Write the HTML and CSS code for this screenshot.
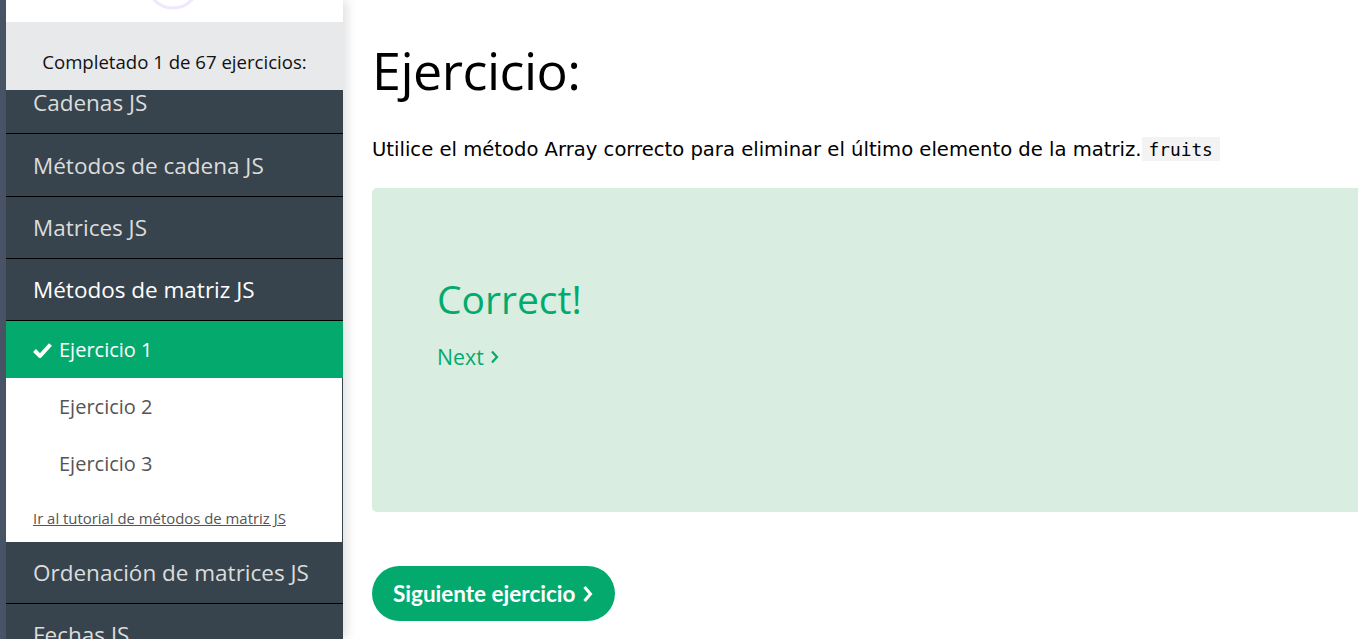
FILE: index.html
```html
<!DOCTYPE html>
<html lang="es">
<head>
<meta charset="utf-8">
<title>Ejercicio</title>
<link rel="stylesheet" href="styles.css">
</head>
<body>
<div class="strip"></div>
<aside class="sidebar">
  <div class="top">
    <svg class="ring" width="80" height="22" viewBox="0 0 80 22"><circle cx="40" cy="-18" r="26" fill="none" stroke="#efe7fe" stroke-width="3"/></svg>
  </div>
  <div class="progress">Completado 1 de 67 ejercicios:</div>
  <div class="list">
    <div class="item first">Cadenas JS</div>
    <div class="item tall">Métodos de cadena JS</div>
    <div class="item">Matrices JS</div>
    <div class="item open">Métodos de matriz JS</div>
    <div class="sub">
      <div class="ex active"><svg class="check" width="19" height="16" viewBox="0 0 19 16"><path d="M1.5 8.5 L7 14 L17.5 2.5" fill="none" stroke="#fff" stroke-width="4" stroke-linejoin="miter"/></svg>Ejercicio 1</div>
      <div class="ex">Ejercicio 2</div>
      <div class="ex">Ejercicio 3</div>
      <a class="tut" href="#">Ir al tutorial de métodos de matriz JS</a>
    </div>
    <div class="item">Ordenación de matrices JS</div>
    <div class="item">Fechas JS</div>
  </div>
</aside>
<main class="main">
  <h1 class="title">Ejercicio:</h1>
  <p class="task">Utilice el método Array correcto para eliminar el último elemento de la matriz.<code class="code">fruits</code></p>
  <div class="panel">
    <div class="correct">Correct!</div>
    <div class="next">Next <svg class="chev" width="9" height="14" viewBox="0 0 9 14"><path d="M2 1.5 L7 7 L2 12.5" fill="none" stroke="#04aa6d" stroke-width="2.2"/></svg></div>
  </div>
  <a class="btn" href="#">Siguiente ejercicio <svg class="chev2" width="11" height="18" viewBox="0 0 11 18"><path d="M2.5 2 L8.5 9 L2.5 16" fill="none" stroke="#fff" stroke-width="3"/></svg></a>
</main>
</body>
</html>
```
FILE: styles.css
```css
html, body { margin: 0; padding: 0; height: 100%; overflow: hidden; background: #fff; }
body { display: flex; font-family: "Open Sans", "Noto Sans", sans-serif; }
.strip { width: 6px; flex: none; background: #4a5467; }
.sidebar { width: 337px; flex: none; background: #38444d; display: flex; flex-direction: column; box-shadow: 4px 0 10px rgba(0,0,0,0.12); position: relative; z-index: 2; height: 100%; overflow: hidden; }
.top { height: 22px; flex: none; background: #fff; display: flex; justify-content: center; }
.ring { display: block; margin-left: -4px; }
.progress { height: 68px; flex: none; background: #e8e9eb; color: #111; font-size: 18.6px; display: flex; align-items: center; justify-content: center; padding-top: 10px; box-sizing: border-box; position: relative; z-index: 1; }
.list { display: flex; flex-direction: column; flex: none; }
.item { height: 61px; border-bottom: 1px solid #000; color: #dcdcdc; font-size: 22.5px; padding-left: 27px; display: flex; align-items: center; flex: none; }
.item.first { margin-top: -18px; }
.item.tall { height: 62px; }
.item.open { color: #fff; }
.sub { background: #fff; margin-right: 1px; display: flex; flex-direction: column; height: 221px; flex: none; }
.ex { height: 57px; padding-left: 53px; display: flex; align-items: center; font-size: 20px; color: #555; flex: none; }
.ex.active { background: #04aa6d; color: #fff; padding-left: 27px; margin-right: -1px; }
.check { margin-right: 7px; }
.tut { font-size: 14.9px; color: #555; padding-left: 27px; margin-top: 16px; align-self: flex-start; }
.main { flex: 1; padding-left: 29px; min-width: 0; }
.title { font-family: "Open Sans", sans-serif; font-weight: 400; font-size: 52px; margin: 39px 0 0; line-height: 62px; letter-spacing: -0.5px; }
.task { font-family: "DejaVu Sans", Verdana, sans-serif; font-size: 19.6px; line-height: 24px; margin: 37px 0 0; color: #000; white-space: nowrap; }
.code { font-family: "DejaVu Sans Mono", "Liberation Mono", monospace; font-size: 17.8px; background: #f3f3f3; padding: 2px 7px 1px; }
.panel { background: #d9eee1; border-radius: 5px; height: 324px; margin: 26px -20px 0 0; padding: 86px 0 0 65px; box-sizing: border-box; }
.correct { color: #04aa6d; font-size: 39px; line-height: 1.3; }
.next { color: #04aa6d; font-size: 21.3px; margin-top: 17px; display: flex; align-items: center; }
.chev { margin-left: 6px; margin-top: 2px; }
.btn { display: inline-flex; align-items: center; height: 55px; margin-top: 54px; padding: 0 22px 0 21px; border-radius: 28px; background: #04aa6d; color: #fff; font-family: "Lato", sans-serif; font-weight: 700; font-size: 22.5px; text-decoration: none; }
.chev2 { margin-left: 7px; }
```
